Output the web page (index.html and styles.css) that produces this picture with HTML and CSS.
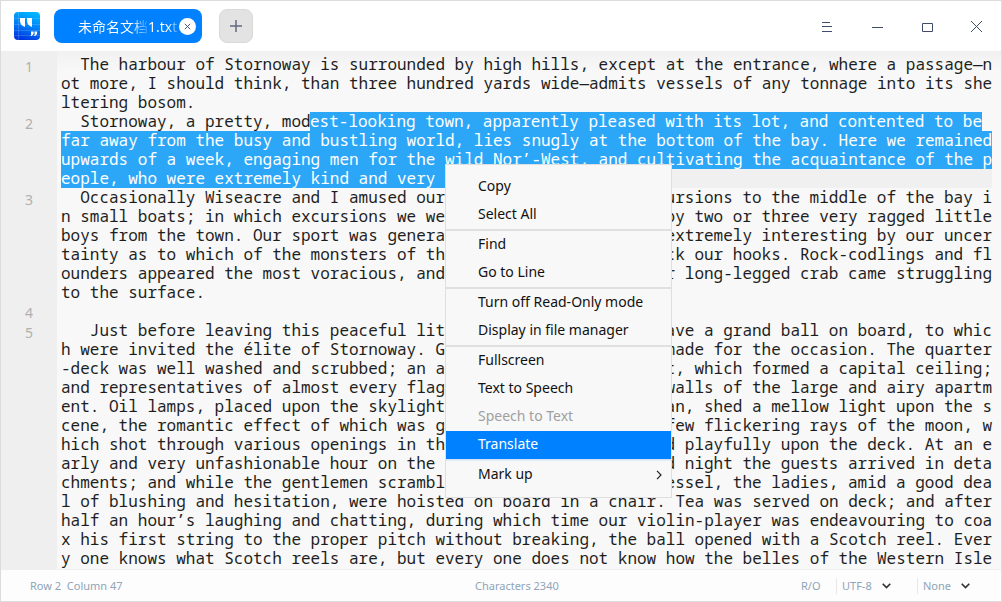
FILE: index.html
```
<!DOCTYPE html>
<html lang="en">
<head>
<meta charset="utf-8">
<title>未命名文档1.txt</title>
<link rel="stylesheet" href="styles.css">
</head>
<body>
<div class="window">
  <header class="titlebar">
    <svg class="logo" width="26" height="28" viewBox="0 0 26 28">
      <defs><linearGradient id="lg" x1="0.7" y1="0" x2="0.4" y2="1"><stop offset="0" stop-color="#00b8ff"/><stop offset="0.5" stop-color="#0080f8"/><stop offset="1" stop-color="#0038e0"/></linearGradient></defs>
      <rect width="26" height="28" rx="4" fill="url(#lg)"/>
      <path d="M4.500 0V28M0 6.500H26M0 12.500H26M0 18.500H26M0 23.500H26" stroke="#fff" stroke-opacity=".15" fill="none"/>
      <path d="M6 6h5v9c-3-1-5-3-5-6zM13 6h5v9c-3-1-5-3-5-6z" fill="#fff"/>
      <path d="M17 19.500h2.600v2.500l-2 2h-1l.8-2.200H17zM20.500 19.500h2.600v2.500l-2 2h-1l.8-2.200h-.4z" fill="#fff"/>
    </svg>
    <div class="tab">
      <span class="tab-cjk">未命名文档</span><span class="tab-ext">1.txt</span>
      <svg class="tab-close" width="17" height="17" viewBox="0 0 17 17"><circle cx="8.500" cy="8.500" r="8.500" fill="#fff"/><path d="M5.800 5.800l5.400 5.400M11.200 5.800l-5.400 5.400" stroke="#48536c" fill="none"/></svg>
    </div>
    <div class="add"><svg width="12" height="12" viewBox="0 0 12 12"><path d="M6 0V12M0 6H12" stroke="#616a80" stroke-width="1.500"/></svg></div>
    <div class="controls">
      <svg width="50" height="50" viewBox="0 0 50 50"><path d="M20 21.500h8M20 25.500h10M20 30.500h10"/></svg>
      <svg width="50" height="50" viewBox="0 0 50 50"><path d="M20 26.500h11"/></svg>
      <svg width="50" height="50" viewBox="0 0 50 50"><path d="M20.500 22.500h10v8h-10z"/></svg>
      <svg width="49" height="50" viewBox="0 0 49 50"><path d="M19 20l11 11M30 20l-11 11"/></svg>
    </div>
  </header>
  <main class="editor">
    <div class="gutter"><span class="n3">1</span><span class="n4">2</span><span class="n6">3</span><span class="n1 up">4</span><span class="n1">5</span></div>
    <div class="text">
      <div class="line">  The harbour of Stornoway is surrounded by high hills, except at the entrance, where a passage—n</div>
      <div class="line">ot more, I should think, than three hundred yards wide—admits vessels of any tonnage into its she</div>
      <div class="line">ltering bosom.</div>
      <div class="line">  Stornoway, a pretty, mod<mark class="start">est-looking town, apparently pleased with its lot, and contented to be</mark></div>
      <div class="line"><mark>far away from the busy and bustling world, lies snugly at the bottom of the bay. Here we remained</mark></div>
      <div class="line"><mark>upwards of a week, engaging men for the wild Nor’-West, and cultivating the acquaintance of the p</mark></div>
      <div class="line current"><mark>eople, who were extremely kind and very </mark></div>
      <div class="line split"><span>  Occasionally Wiseacre and I amused our</span><span>excursions to the middle of the bay i</span></div>
      <div class="line split"><span>n small boats; in which excursions we we</span><span>by two or three very ragged little</span></div>
      <div class="line split"><span>boys from the town. Our sport was genera</span><span>extremely interesting by our uncer</span></div>
      <div class="line split"><span>tainty as to which of the monsters of th</span><span>struck our hooks. Rock-codlings and fl</span></div>
      <div class="line split"><span>ounders appeared the most voracious, and</span><span>or long-legged crab came struggling</span></div>
      <div class="line">to the surface.</div>
      <div class="line"></div>
      <div class="line split"><span>   Just before leaving this peaceful lit</span><span>have a grand ball on board, to whic</span></div>
      <div class="line split"><span>h were invited the élite of Stornoway. G</span><span>made for the occasion. The quarter</span></div>
      <div class="line split"><span>-deck was well washed and scrubbed; an a</span><span>it, which formed a capital ceiling;</span></div>
      <div class="line split"><span>and representatives of almost every flag</span><span>walls of the large and airy apartm</span></div>
      <div class="line split"><span>ent. Oil lamps, placed upon the skylight</span><span>an, shed a mellow light upon the s</span></div>
      <div class="line split"><span>cene, the romantic effect of which was g</span><span>few flickering rays of the moon, w</span></div>
      <div class="line split"><span>hich shot through various openings in th</span><span>and playfully upon the deck. At an e</span></div>
      <div class="line split"><span>arly and very unfashionable hour on the </span><span>and night the guests arrived in deta</span></div>
      <div class="line split"><span>chments; and while the gentlemen scrambl</span><span>vessel, the ladies, amid a good dea</span></div>
      <div class="line">l of blushing and hesitation, were hoisted on board in a chair. Tea was served on deck; and after</div>
      <div class="line">half an hour’s laughing and chatting, during which time our violin-player was endeavouring to coa</div>
      <div class="line">x his first string to the proper pitch without breaking, the ball opened with a Scotch reel. Ever</div>
      <div class="line">y one knows what Scotch reels are, but every one does not know how the belles of the Western Isle</div>
    </div>
  </main>
  <footer class="status">
    <span class="position">Row 2&nbsp; Column 47</span>
    <span class="count">Characters 2340</span>
    <span class="mode">R/O</span>
    <span class="pick enc">UTF-8<svg width="9" height="6" viewBox="0 0 9 6"><path d="M.7.8l3.800 3.800L8.300.8"/></svg></span>
    <span class="pick lang">None<svg width="9" height="6" viewBox="0 0 9 6"><path d="M.7.8l3.800 3.800L8.300.8"/></svg></span>
  </footer>
  <nav class="menu">
    <div class="item">Copy</div>
    <div class="item">Select All</div>
    <hr>
    <div class="item">Find</div>
    <div class="item">Go to Line</div>
    <hr>
    <div class="item">Turn off Read-Only mode</div>
    <div class="item">Display in file manager</div>
    <hr>
    <div class="item">Fullscreen</div>
    <div class="item">Text to Speech</div>
    <div class="item disabled">Speech to Text</div>
    <div class="item active">Translate</div>
    <hr class="soft">
    <div class="item">Mark up<svg width="6" height="10" viewBox="0 0 6 10"><path d="M1 .8L5 5 1 9.200"/></svg></div>
  </nav>
</div>
</body>
</html>
```
FILE: styles.css
```
* { box-sizing: border-box; }
body { margin: 0; font-family: "Noto Sans", "Noto Sans CJK SC", sans-serif; }
.window { position: relative; width: 1002px; height: 602px; border: 1px solid #dcdcdc; background: #fff; display: flex; flex-direction: column; overflow: hidden; }
.titlebar { height: 50px; flex: none; display: flex; align-items: center; padding-left: 13px; }
.logo { display: block; }
.tab { width: 148px; height: 34px; margin-left: 14px; padding-left: 24px; padding-right: 6px; border-radius: 8px; background: #0081ff; color: #fff; display: flex; align-items: center; font-size: 14px; white-space: nowrap; }
.tab-cjk { width: 70px; font-family: "Noto Sans CJK SC", sans-serif; color: transparent; background: linear-gradient(90deg, #fff 54px, rgba(255, 255, 255, .15) 70px); background-clip: text; -webkit-background-clip: text; }
.tab-ext { font-size: 14px; color: transparent; background: linear-gradient(90deg, #fff 20px, rgba(255, 255, 255, .25) 29px); background-clip: text; -webkit-background-clip: text; }
.tab-close { margin-left: auto; }
.add { width: 34px; height: 34px; margin-left: 17px; border: 1px solid #d9d9d9; border-radius: 8px; background: #e3e3e3; display: flex; align-items: center; justify-content: center; }
.controls { margin-left: auto; display: flex; }
.controls svg { stroke: #414d68; fill: none; }
.editor { flex: 1; display: flex; background: linear-gradient(#f1f1f1, #f8f8f8 20px); min-height: 0; }
.gutter { width: 56px; flex: none; padding-top: 4px; background: #efefef; color: #b0b0b0; font-size: 14px; text-align: center; display: flex; flex-direction: column; }
.gutter span { line-height: 24px; height: 19px; }
.gutter .n3 { height: 57px; }
.gutter .n4 { height: 76px; }
.gutter .n6 { height: 114px; }
.gutter .up { line-height: 22px; }
.text { width: 935px; padding: 4px 0 0 4px; font-family: "Noto Sans Mono", "DejaVu Sans Mono", monospace; font-size: 16px; color: #1e1e1e; }
.line { height: 19px; line-height: 19px; white-space: pre; }
.split { display: flex; justify-content: space-between; }
mark { display: inline-block; height: 19px; vertical-align: top; background: #2ca7f8; color: #fff; }
.start { margin-left: -.6px; }
.current { background: #f0f0f0; }
.status { height: 32px; flex: none; border-top: 1px solid #f0f0f0; background: #fdfdfd; color: #8fa4b8; font-size: 11px; display: flex; align-items: center; padding-left: 29px; }
.position { width: 445px; }
.count { width: 326px; }
.mode { width: 35px; }
.pick { height: 16px; line-height: 16px; border-left: 1px solid #e8e8e8; padding-left: 5px; width: 81px; display: flex; align-items: center; }
.pick svg { margin-left: 10px; fill: none; stroke: #303030; stroke-width: 1.600; }
.menu { position: absolute; left: 444px; top: 163px; width: 227px; height: 334px; padding-top: 8px; border: 1px solid #dfdfdf; background: #f8f8f8; color: #111; font-size: 14px; }
.item { height: 28px; line-height: 26px; padding: 0 9px 2px 32px; display: flex; align-items: center; justify-content: space-between; }
.item svg { margin-top: 1px; fill: none; stroke: #222; stroke-width: 1.200; }
.disabled { color: #a0a0a0; }
.active { background: #0081ff; color: #fff; }
hr { height: 2px; margin: 0; border: 0; background: #e0e0e0; }
.soft { background: linear-gradient(#cfe0f2, #e8f0f8); }
```
